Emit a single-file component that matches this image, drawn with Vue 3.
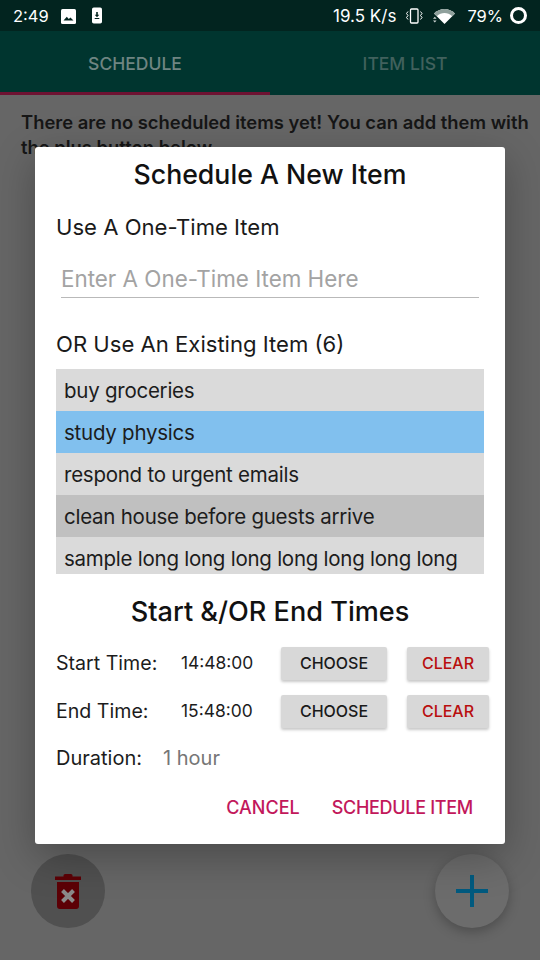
<template>
  <div class="screen">
    <div class="status-bar">
      <div class="status-left">
        <span class="clock">2:49</span>
        <svg class="st-icon" width="16" height="16" viewBox="0 0 16 16">
          <rect x="1" y="1" width="15" height="15" rx="1.500" fill="#fff" />
          <path d="M3.500 12.500 6.800 8.800 8.800 11 10.400 9.500 13.500 12.500Z" fill="#02241f" />
        </svg>
        <svg class="st-icon download" width="12" height="17" viewBox="0 0 12 17">
          <rect x="1" y="0.500" width="10" height="16" rx="1.800" fill="#fff" />
          <path d="M5.200 5h1.600v2.800h1.500L6 10.300 3.700 7.800h1.500Z M3.700 11h4.600v.9H3.700Z" fill="#02241f" />
        </svg>
      </div>
      <div class="status-right">
        <span class="speed">19.5 K/s</span>
        <svg class="vibrate" width="18" height="16" viewBox="0 0 18 16" fill="none" stroke="#fff">
          <rect x="5.500" y="1" width="7.500" height="14" rx="1" stroke-width="1.300" />
          <path d="M3 3.500 1.500 5.500 3 7.500 1.500 9.500 3 11.500M15.500 3.500 17 5.500 15.500 7.500 17 9.500 15.500 11.500" stroke-width="1" />
        </svg>
        <svg class="wifi" width="24" height="18" viewBox="0 0 24 18">
          <path d="M2 6.500C8 .5 17 .5 23 6.500L12.500 17Z" fill="#fff" />
          <path d="M2 6.500C8 .5 17 .5 23 6.500L20.300 9.200C15.500 5 9.500 5 4.700 9.200Z" fill="#8fa09c" />
          <path d="M1 11.800h3.600L2.800 9.800ZM1 13.500h3.600L2.800 15.500Z" fill="#cfd6d4" />
        </svg>
        <span class="battery">79%</span>
        <span class="ring"></span>
      </div>
    </div>

    <div class="tabs">
      <div class="tab active">SCHEDULE</div>
      <div class="tab">ITEM LIST</div>
    </div>

    <div class="content">
      <p class="empty-msg">There are no scheduled items yet! You can add them with the plus button below</p>
      <div class="fab-row">
        <div class="fab trash">
          <svg width="26" height="35" viewBox="0 0 26 35">
            <path d="M0 2.500h8.500V1.500C8.500 .5 9.500 0 10.500 0h5c1 0 2 .5 2 1.500v1H26V6H0Z" fill="#5c0006" />
            <path d="M2 8h22v24c0 1.700-1 3-2.800 3H4.800C3 35 2 33.700 2 32Z" fill="#5c0006" />
            <path d="M7.500 16.500 18.500 27.500M18.500 16.500 7.500 27.500" stroke="#8b8b8b" stroke-width="4" fill="none" />
          </svg>
        </div>
        <div class="fab plus">
          <svg width="32" height="32" viewBox="0 0 32 32">
            <path d="M14 0h4v32h-4Z M0 14h32v4H0Z" fill="#015a7f" />
          </svg>
        </div>
      </div>
    </div>

    <div class="overlay">
      <div class="dialog">
        <h2 class="title">Schedule A New Item</h2>
        <div class="label first">Use A One-Time Item</div>
        <div class="one-time">Enter A One-Time Item Here</div>
        <div class="label second">OR Use An Existing Item (6)</div>
        <ul class="items">
          <li v-for="item in items" :key="item.name" :class="item.state">{{ item.name }}</li>
        </ul>
        <h2 class="title times">Start &amp;/OR End Times</h2>
        <div v-for="row in timeRows" :key="row.label" class="time-row">
          <span class="time-label">{{ row.label }}</span>
          <span class="time-value">{{ row.value }}</span>
          <button class="btn choose">CHOOSE</button>
          <button class="btn clear">CLEAR</button>
        </div>
        <div class="duration">
          <span>Duration:</span>
          <span class="duration-value">1 hour</span>
        </div>
        <div class="actions">
          <span>CANCEL</span>
          <span class="confirm">SCHEDULE ITEM</span>
        </div>
      </div>
    </div>
  </div>
</template>

<script setup>
const items = [
  { name: 'buy groceries', state: '' },
  { name: 'study physics', state: 'selected' },
  { name: 'respond to urgent emails', state: '' },
  { name: 'clean house before guests arrive', state: 'pressed' },
  { name: 'sample long long long long long long long', state: 'cut' },
];

const timeRows = [
  { label: 'Start Time:', value: '14:48:00' },
  { label: 'End Time:', value: '15:48:00' },
];
</script>

<style>
body {
  margin: 0;
}
</style>

<style scoped>
.screen {
  position: relative;
  width: 540px;
  height: 960px;
  overflow: hidden;
  display: flex;
  flex-direction: column;
  background: #666;
  font-family: Inter, "Open Sans", sans-serif;
  color: #1c1c1c;
}

.status-bar {
  height: 31px;
  flex: none;
  display: flex;
  justify-content: space-between;
  align-items: center;
  background: #02241f;
  color: #fff;
  font-size: 17px;
  padding: 0 13px 0 13px;
}
.status-left,
.status-right {
  display: flex;
  align-items: center;
}
.clock {
  width: 47px;
  font-size: 16.500px;
}
.download {
  margin-left: 15px;
}
.vibrate {
  margin-left: 9px;
}
.wifi {
  margin-left: 9px;
}
.battery {
  margin-left: 11px;
  margin-right: 7px;
  font-size: 16.500px;
}
.ring {
  width: 11px;
  height: 11px;
  border: 3px solid #fff;
  border-radius: 50%;
}

.tabs {
  height: 64px;
  flex: none;
  display: flex;
  background: #00352f;
}
.tab {
  flex: 1;
  display: flex;
  align-items: center;
  justify-content: center;
  box-sizing: border-box;
  font-size: 17.500px;
  font-weight: 500;
  color: #41615d;
  border-bottom: 3px solid transparent;
  padding-top: 4px;
}
.tab.active {
  color: #6f8582;
  border-bottom-color: #6e1232;
}

.content {
  flex: 1;
  display: flex;
  flex-direction: column;
  justify-content: space-between;
  padding: 15px 4px 32px 21px;
}
.empty-msg {
  margin: 0;
  font-size: 18.400px;
  font-weight: 600;
  line-height: 25px;
  color: #161616;
}
.fab-row {
  display: flex;
  justify-content: space-between;
  padding: 0 27px 0 10px;
}
.fab {
  width: 74px;
  height: 74px;
  border-radius: 50%;
  display: flex;
  align-items: center;
  justify-content: center;
}
.trash {
  background: #505050;
}
.plus {
  background: #6c6c6c;
  box-shadow: 0 4px 12px rgba(0, 0, 0, 0.25);
}

.overlay {
  position: absolute;
  top: 31px;
  left: 0;
  right: 0;
  bottom: 0;
  display: flex;
  align-items: center;
  justify-content: center;
}
.dialog {
  width: 470px;
  height: 697px;
  box-sizing: border-box;
  background: #fff;
  border-radius: 3px;
  padding: 10px 21px 0;
  box-shadow: 0 12px 40px rgba(0, 0, 0, 0.28);
  display: flex;
  flex-direction: column;
}
.title {
  margin: 0;
  text-align: center;
  font-size: 26.700px;
  line-height: 34px;
  font-weight: 500;
  color: #111;
}
.label {
  font-size: 22.100px;
  line-height: 30px;
  color: #1a1a1a;
}
.label.first {
  margin-top: 21px;
}
.label.second {
  margin-top: 31px;
}
.one-time {
  margin: 22px 5px 0;
  height: 34px;
  box-sizing: border-box;
  border-bottom: 1.500px solid #b9b9b9;
  font-size: 22.400px;
  line-height: 30px;
  color: #a3a3a3;
}
.items {
  list-style: none;
  margin: 10px 0 0;
  padding: 0;
  height: 205px;
  overflow: hidden;
  width: 428px;
}
.items li {
  height: 42px;
  box-sizing: border-box;
  padding-left: 8px;
  font-size: 20.500px;
  letter-spacing: -0.25px;
  line-height: 43px;
  white-space: nowrap;
  background: #dadada;
  color: #1c1c1c;
}
.items li.selected {
  background: #81c0ee;
}
.items li.pressed {
  background: #c0c0c0;
}
.title.times {
  margin-top: 21px;
  font-size: 27.100px;
}
.time-row {
  display: flex;
  align-items: center;
  margin-top: 17px;
  height: 34px;
  width: 433px;
}
.time-row + .time-row {
  margin-top: 14px;
}
.time-label {
  width: 125px;
  font-size: 19.600px;
  color: #1c1c1c;
}
.time-value {
  width: 100px;
  font-size: 17.400px;
  color: #1c1c1c;
  position: relative;
  top: -1px;
}
.btn {
  height: 33px;
  border: none;
  border-radius: 2px;
  background: #d8d8d8;
  box-shadow: 0 2px 3px rgba(0, 0, 0, 0.22);
  font-family: inherit;
  font-size: 16px;
  font-weight: 500;
  padding: 0;
}
.choose {
  width: 106px;
  color: #1a1a1a;
}
.clear {
  width: 82px;
  margin-left: 20px;
  color: #b90f0f;
}
.duration {
  display: flex;
  align-items: center;
  gap: 21px;
  margin-top: 13px;
  font-size: 20px;
  line-height: 34px;
}
.duration-value {
  color: #767676;
}
.actions {
  display: flex;
  justify-content: flex-end;
  gap: 32px;
  margin-top: 18px;
  padding-right: 11px;
  font-size: 18px;
  font-weight: 500;
  line-height: 30px;
  color: #c2185b;
}
.confirm {
  letter-spacing: -0.3px;
}
</style>
